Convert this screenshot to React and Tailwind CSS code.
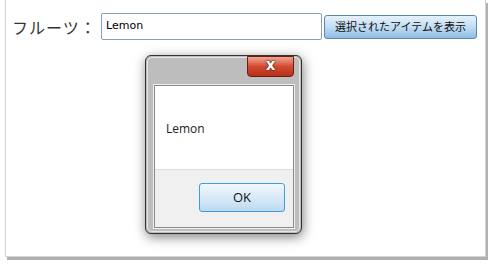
export default function App() {
  return (
    <div className="w-[492px] h-[268px] bg-white relative overflow-hidden" style={{ fontFamily: '"Liberation Sans", "Noto Sans CJK JP", sans-serif' }}>
      <div className="absolute left-[5px] top-0 w-[481px] h-[257px] bg-white border-l border-r border-b border-[#d4d4d4] shadow-[2px_3px_0_#b0b0b0]">
        <div className="flex items-center pl-[6px] pt-[13px]">
          <span className="text-[16px] text-[#333] leading-none w-[89px] tracking-[1px]" style={{ fontFamily: '"Noto Sans CJK JP", sans-serif' }}>フルーツ：</span>
          <div className="w-[221px] h-[27px] border border-[#8aa0b8] rounded-[2px] bg-white flex items-center pl-[4px] text-[11px] text-black" style={{ fontFamily: '"DejaVu Sans", sans-serif' }}>Lemon</div>
          <div className="ml-[2px] w-[153px] h-[24px] border border-[#5a87b0] rounded-[3px] bg-gradient-to-b from-[#e6f2fb] via-[#c2def3] to-[#8fbde2] flex items-center justify-center text-[11px] text-[#111]" style={{ fontFamily: '"Noto Sans CJK JP", sans-serif' }}>選択されたアイテムを表示</div>
        </div>
      </div>
      <div className="absolute left-[145px] top-[55px] w-[157px] h-[179px] rounded-[6px] border border-[#333] bg-[#bdbdbd] shadow-[1px_3px_12px_rgba(0,0,0,0.5)]">
        <div className="absolute inset-[1px] rounded-[5px] border border-[#e6e6e6]"></div>
        <div className="absolute left-[101px] top-[0px] w-[47px] h-[21px] rounded-b-[4px] border border-[#6e1c10] bg-gradient-to-b from-[#eba593] via-[#d24a30] to-[#b5301a] flex items-center justify-center">
          <span className="text-white text-[15px] font-bold leading-none -mt-[2px]" style={{ fontFamily: '"DejaVu Sans", sans-serif', textShadow: '0 0 1px #3a0a05, 0 0 2px #3a0a05' }}>x</span>
        </div>
        <div className="absolute left-[7px] top-[28px] w-[142px] h-[145px] border border-[#efefef]">
          <div className="w-full h-full border border-[#8a8a8a] flex flex-col">
            <div className="h-[83px] bg-white flex items-center pl-[11px] pt-[2px] text-[12px] text-[#222]" style={{ fontFamily: '"Open Sans", sans-serif' }}>Lemon</div>
            <div className="flex-1 bg-[#f0f0f0] border-t border-[#dedede] flex justify-end pt-[13px] pr-[8px]">
              <div className="w-[86px] h-[29px] rounded-[3px] border border-[#3c9fd8] bg-gradient-to-b from-[#f1f8fd] via-[#d9eaf7] to-[#bcdaf0] flex items-center justify-center text-[13px] text-[#111]" style={{ fontFamily: '"Open Sans", sans-serif' }}>OK</div>
            </div>
          </div>
        </div>
      </div>
    </div>
  );
}
